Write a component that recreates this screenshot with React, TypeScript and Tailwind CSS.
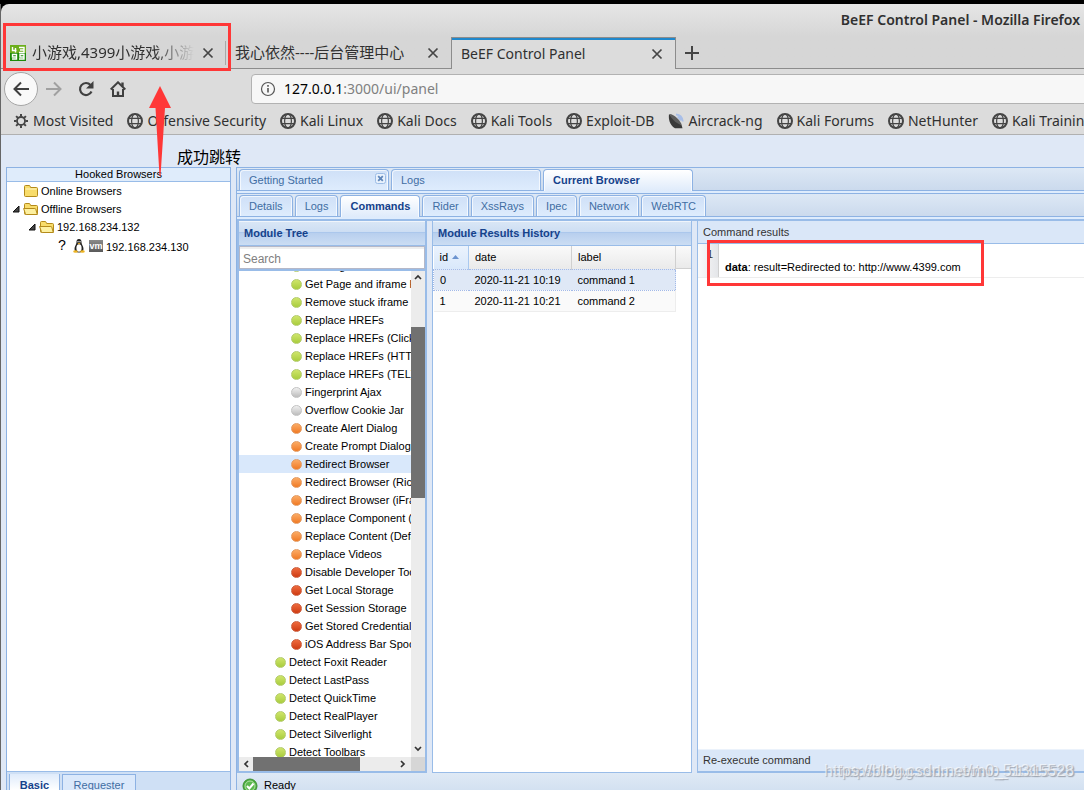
import type { ReactNode } from "react";
import { clsx } from "clsx";

type Dot = "green" | "gray" | "orange" | "red";

type Module = {
  name: string;
  dot: Dot;
  level: 1 | 2;
};

const MODULES: Module[] = [
  { name: "Get Page HTML", dot: "green", level: 2 },
  { name: "Get Page and iframe HTML", dot: "green", level: 2 },
  { name: "Remove stuck iframe", dot: "green", level: 2 },
  { name: "Replace HREFs", dot: "green", level: 2 },
  { name: "Replace HREFs (Click Events)", dot: "green", level: 2 },
  { name: "Replace HREFs (HTTPS)", dot: "green", level: 2 },
  { name: "Replace HREFs (TEL)", dot: "green", level: 2 },
  { name: "Fingerprint Ajax", dot: "gray", level: 2 },
  { name: "Overflow Cookie Jar", dot: "gray", level: 2 },
  { name: "Create Alert Dialog", dot: "orange", level: 2 },
  { name: "Create Prompt Dialog", dot: "orange", level: 2 },
  { name: "Redirect Browser", dot: "orange", level: 2 },
  { name: "Redirect Browser (Rickroll)", dot: "orange", level: 2 },
  { name: "Redirect Browser (iFrame)", dot: "orange", level: 2 },
  { name: "Replace Component (Deface)", dot: "orange", level: 2 },
  { name: "Replace Content (Deface)", dot: "orange", level: 2 },
  { name: "Replace Videos", dot: "orange", level: 2 },
  { name: "Disable Developer Tools", dot: "red", level: 2 },
  { name: "Get Local Storage", dot: "red", level: 2 },
  { name: "Get Session Storage", dot: "red", level: 2 },
  { name: "Get Stored Credentials", dot: "red", level: 2 },
  { name: "iOS Address Bar Spoofing", dot: "red", level: 2 },
  { name: "Detect Foxit Reader", dot: "green", level: 1 },
  { name: "Detect LastPass", dot: "green", level: 1 },
  { name: "Detect QuickTime", dot: "green", level: 1 },
  { name: "Detect RealPlayer", dot: "green", level: 1 },
  { name: "Detect Silverlight", dot: "green", level: 1 },
  { name: "Detect Toolbars", dot: "green", level: 1 },
];

const DOT_CLASS: Record<Dot, string> = {
  green: "from-[#cfe56a] to-[#a9cd3c] border-[#b3cb6c]",
  gray: "from-[#f0f0f0] to-[#bdbdbd] border-[#c2c2c2]",
  orange: "from-[#fbab63] to-[#f07a20] border-[#e39a62]",
  red: "from-[#ee6a3c] to-[#cf3a10] border-[#cc6040]",
};

const BOOKMARKS = [
  "Offensive Security",
  "Kali Linux",
  "Kali Docs",
  "Kali Tools",
  "Exploit-DB",
  "Aircrack-ng",
  "Kali Forums",
  "NetHunter",
  "Kali Training",
];

const COMMAND_TABS = ["Details", "Logs", "Commands", "Rider", "XssRays", "Ipec", "Network", "WebRTC"];

const HISTORY = [
  { id: 0, date: "2020-11-21 10:19", label: "command 1" },
  { id: 1, date: "2020-11-21 10:21", label: "command 2" },
];

function GlobeIcon() {
  return (
    <svg className="size-4 shrink-0" viewBox="0 0 16 16" fill="none" stroke="#454545">
      <circle cx="8" cy="8" r="7" strokeWidth="2" />
      <ellipse cx="8" cy="8" rx="3.4" ry="7" strokeWidth="1.2" />
      <path d="M1.8 5.4h12.4M1.8 10.6h12.4" strokeWidth="1.2" />
    </svg>
  );
}

function GearIcon() {
  return (
    <svg className="size-4 shrink-0" viewBox="0 0 16 16" fill="none" stroke="#454545">
      <circle cx="8" cy="8" r="4" strokeWidth="1.8" />
      <path
        d="M8 1v2.6M8 12.4V15M1 8h2.6M12.4 8H15M3.1 3.1l1.8 1.8M11.1 11.1l1.8 1.8M12.9 3.1l-1.8 1.8M4.9 11.1l-1.8 1.8"
        strokeWidth="2"
      />
    </svg>
  );
}

function DishIcon() {
  return (
    <svg className="size-4 shrink-0" viewBox="0 0 16 16">
      <path d="M8 1.5c4 .4 6.4 3 6.8 7M9.5 4c2 .4 2.8 1.5 3.2 3.5" fill="none" stroke="#a9bfe8" strokeWidth="1.8" />
      <path d="M1 1c-.6 5 .4 11 6 14.2h7.5L13.6 12C9.5 9.5 5 5.5 1 1z" fill="#3a3a3a" />
      <path d="M1.5 1c1 3.5 5.5 9 12.2 11.3C13.5 8.5 6 1 1.5 1z" fill="#5d5d5d" />
    </svg>
  );
}

function CloseIcon() {
  return (
    <svg className="size-3 shrink-0" viewBox="0 0 12 12" stroke="#454545" strokeWidth="1.7" fill="none">
      <path d="M1.5 1.5l9 9M10.5 1.5l-9 9" />
    </svg>
  );
}

function Favicon4399() {
  return (
    <svg className="size-4 shrink-0" viewBox="0 0 16 16">
      <rect width="16" height="8" fill="#6cae1c" />
      <rect y="8" width="16" height="8" fill="#1c8a08" />
      <path
        d="M2.5 2v3.5h4M5.5 3v4.5M9 2.5h5v5H9M10 5h4M2 14h4.5V9.500H2.500V12h4M9 14h5V9.500h-4V12h4"
        fill="none"
        stroke="#fff"
        strokeWidth="1.4"
      />
    </svg>
  );
}

function FolderIcon({ open }: { open?: boolean }) {
  return (
    <svg className="h-4 w-4 shrink-0" viewBox="0 0 16 16">
      <path
        d="M1.5 12.5V3.5q0-1 1-1h3.5q1 0 1.3 1l.3 1h5.9q1 0 1 1v7q0 1-1 1h-11q-1 0-1-1z"
        fill="#f8dc6a"
        stroke="#b48a1a"
      />
      {open ? (
        <path d="M.6 7.5h11.2q.8 0 1 .8l1.5 5.2H3.4q-.8 0-1-.8z" fill="#fdf0a0" stroke="#b48a1a" />
      ) : (
        <path d="M2.5 6h11" stroke="#fff6c8" />
      )}
    </svg>
  );
}

function Expander() {
  return (
    <svg className="size-2 shrink-0" viewBox="0 0 8 8">
      <path d="M7 1v6H1z" fill="#444" stroke="#111" />
    </svg>
  );
}

function PenguinIcon() {
  return (
    <svg className="size-4 shrink-0" viewBox="0 0 16 16">
      <path
        d="M8 1c-2 0-2.6 1.5-2.5 3.5C5.4 6.5 3.5 8 3.5 11c0 2 1.500 3.500 4.500 3.500s4.500-1.500 4.500-3.500c0-3-1.900-4.500-2-6.500C10.600 2.500 10 1 8 1z"
        fill="#222"
      />
      <ellipse cx="8" cy="10" rx="2.6" ry="3.8" fill="#fff" />
      <path d="M6.500 5h3L8 6.500z" fill="#f0b020" />
      <circle cx="7" cy="3.8" r=".7" fill="#fff" />
      <circle cx="9" cy="3.8" r=".7" fill="#fff" />
      <ellipse cx="4.500" cy="13.500" rx="2.300" ry="1.300" fill="#eeb422" />
      <ellipse cx="11.500" cy="13.500" rx="2.300" ry="1.300" fill="#eeb422" />
    </svg>
  );
}

function Chevron({ dir }: { dir: "up" | "down" | "left" | "right" }) {
  const paths = {
    up: "M1 6l3-3 3 3",
    down: "M1 2l3 3 3-3",
    left: "M6 1L3 4l3 3",
    right: "M2 1l3 3-3 3",
  };
  return (
    <svg className="size-2" viewBox="0 0 8 8" fill="none" stroke="#333" strokeWidth="1.7">
      <path d={paths[dir]} />
    </svg>
  );
}

function BrowserTab({ title, active, icon, cjk }: { title: string; active?: boolean; icon?: ReactNode; cjk?: boolean }) {
  return (
    <div
      className={clsx(
        "flex h-8 w-[225px] shrink-0 items-center pr-3",
        active
          ? "border-x border-t border-x-[#8c8c8c] border-t-[#8c8c8c] bg-[#dcdcdc] pl-[9px] shadow-[inset_0_2px_#2088cc]"
          : "border-b border-[#8c8c8c] pl-[9px]",
      )}
    >
      {icon && <span className="mr-1.5">{icon}</span>}
      <button
        className={clsx(
          "min-w-0 flex-1 overflow-hidden text-left whitespace-nowrap",
          cjk && "text-[15px]",
          icon && "mask-r-from-75%",
        )}
      >
        {title}
      </button>
      <button className="ml-2" aria-label="Close tab">
        <CloseIcon />
      </button>
    </div>
  );
}

function ExtTab({ label, active, wide, closable }: { label: string; active?: boolean; wide?: boolean; closable?: boolean }) {
  return (
    <button
      className={clsx(
        "flex justify-between rounded-t border border-b-0 border-[#8db2e3] px-[9px] text-left leading-5 shadow-[inset_1px_1px_#ffffffb0,inset_-1px_0_#ffffffb0]",
        wide && "w-[150px]",
        active
          ? "-mb-px bg-linear-to-b from-white to-[#dfebfb] font-bold text-[#15428b]"
          : "bg-linear-to-b from-[#cfe0f7] to-[#deecfd] text-[#416da3]",
      )}
    >
      {label}
      {closable && (
        <svg className="mt-[3px] -mr-[7px] size-[11px]" viewBox="0 0 11 11">
          <rect x=".5" y=".5" width="10" height="10" rx="2" fill="#e8f1fc" stroke="#9dbde6" />
          <path d="M3.2 3.2l4.6 4.6M7.8 3.2L3.2 7.8" stroke="#5f86ba" strokeWidth="1.8" />
        </svg>
      )}
    </button>
  );
}

function PanelHeader({ children }: { children: ReactNode }) {
  return (
    <h2 className="h-[25px] shrink-0 border-b border-[#99bce8] bg-[linear-gradient(#dae7f6,#cddef3_45%,#abc7ec_46%,#abc7ec_50%,#b8cfee_51%,#cbddf3)] px-[5px] leading-[25px] font-bold text-[#15428b] shadow-[inset_0_1px_#f0f5fb]">
      {children}
    </h2>
  );
}

function FirefoxChrome() {
  return (
    <header className="shrink-0 rounded-tl-lg border-b border-[#b0b0b0] bg-linear-to-b from-[#e6e6e6] to-[#d6d6d6] to-25% font-['Noto_Sans','Noto_Sans_CJK_SC',sans-serif] text-sm text-[#303030]">
      <h1 className="h-[33px] pr-1 text-right leading-8 font-semibold">BeEF Control Panel - Mozilla Firefox</h1>
      <nav className="flex overflow-hidden" aria-label="Tabs">
        <BrowserTab title="小游戏,4399小游戏,小游戏大全" icon={<Favicon4399 />} cjk />
        <div className="-ml-px flex items-center border-b border-[#8c8c8c]">
          <div className="h-6 w-px bg-[#a8a8a8]" />
        </div>
        <BrowserTab title="我心依然----后台管理中心" cjk />
        <BrowserTab title="BeEF Control Panel" active />
        <div className="flex flex-1 items-center border-b border-[#8c8c8c] pl-2">
          <button aria-label="New tab">
            <svg className="size-4" viewBox="0 0 16 16" stroke="#454545" strokeWidth="2">
              <path d="M8 1v14M1 8h14" />
            </svg>
          </button>
        </div>
      </nav>
      <div className="flex h-10 items-center bg-[#dcdcdc] pl-[3px]">
        <button
          aria-label="Back"
          className="flex size-[34px] items-center justify-center rounded-full border border-[#a6a6a6] bg-[#f9f9f9]"
        >
          <svg className="size-4" viewBox="0 0 16 16" fill="none" stroke="#404040" strokeWidth="2">
            <path d="M16 8H1.500M8 1.500L1.500 8 8 14.500" />
          </svg>
        </button>
        <button aria-label="Forward" className="ml-2">
          <svg className="size-4" viewBox="0 0 16 16" fill="none" stroke="#a0a0a0" strokeWidth="2">
            <path d="M0 8h14.500M8 1.500L14.500 8 8 14.500" />
          </svg>
        </button>
        <button aria-label="Reload" className="ml-4">
          <svg className="size-4" viewBox="0 0 16 16">
            <path d="M13.500 10.500A6 6 0 1 1 12.500 4" fill="none" stroke="#404040" strokeWidth="2.2" />
            <path d="M15.500 0v7.500H8z" fill="#404040" />
          </svg>
        </button>
        <button aria-label="Home" className="ml-4">
          <svg className="size-4" viewBox="0 0 16 16" fill="none" stroke="#404040">
            <path d="M.7 8.500L8 1.300l7.300 7.200" strokeWidth="2" />
            <path d="M3 8v7h10V8" strokeWidth="2" />
            <path d="M8 15v-4.500M12.500 1.500v4" strokeWidth="2.4" />
          </svg>
        </button>
        <label className="-mr-1 ml-[125px] flex h-[30px] flex-1 items-center rounded-sm border border-[#b2b2b2] bg-[#f7f7f7] pl-2 text-[#808080]">
          <svg className="mr-2 size-4 shrink-0" viewBox="0 0 16 16" fill="none" stroke="#555">
            <circle cx="8" cy="8" r="6.5" strokeWidth="1.2" />
            <path d="M8 7v4.500M8 4v1.700" strokeWidth="1.6" />
          </svg>
          <span className="text-black">127.0.0.1</span>
          <input type="text" defaultValue=":3000/ui/panel" className="min-w-0 flex-1 outline-none" />
        </label>
      </div>
      <nav
        className="flex h-[25px] items-center gap-3.5 overflow-hidden bg-[#dcdcdc] pb-0.5 pl-3 whitespace-nowrap"
        aria-label="Bookmarks"
      >
        <a href="#visited" className="flex items-center gap-1">
          <GearIcon />
          Most Visited
        </a>
        {BOOKMARKS.map((name) => (
          <a key={name} href="#bookmark" className="flex items-center gap-1">
            {name === "Aircrack-ng" ? <DishIcon /> : <GlobeIcon />}
            {name}
          </a>
        ))}
      </nav>
    </header>
  );
}

function HookedBrowsers() {
  return (
    <aside className="flex w-[225px] shrink-0 flex-col border-x border-t border-[#8db2e3] bg-white">
      <h2 className="border-b border-[#99bce8] bg-[#dfecfb] text-center leading-[13px]">Hooked Browsers</h2>
      <ul className="flex-1 leading-[18px]">
        <li className="flex h-[18px] items-center gap-0.5 pl-4">
          <FolderIcon />
          Online Browsers
        </li>
        <li className="flex h-[18px] items-center gap-[3px] pl-[5px]">
          <Expander />
          <span className="flex items-center gap-0.5">
            <FolderIcon open />
            Offline Browsers
          </span>
        </li>
        <li className="flex h-[18px] items-center gap-[3px] pl-[21px]">
          <Expander />
          <span className="flex items-center gap-0.5">
            <FolderIcon open />
            192.168.234.132
          </span>
        </li>
        <li className="flex h-5 items-center pl-[51px]">
          <span className="w-[13px] font-['Liberation_Mono',monospace] text-sm">?</span>
          <PenguinIcon />
          <span className="mr-[3px] ml-0.5 flex h-3 w-3.5 items-center justify-center bg-linear-to-b from-[#8a8a8a] to-[#5a5a5a] text-[9px] font-bold text-white">
            vm
          </span>
          <span className="pt-0.5">192.168.234.130</span>
        </li>
      </ul>
      <div className="flex h-[19px] gap-0.5 border-t border-[#99bce8] bg-[#cfe0f5] pt-0.5 pl-0.5">
        <button className="w-[51px] border-x border-[#8db2e3] bg-linear-to-b from-[#dfebfb] to-white pt-0.5 leading-[18px] font-bold text-[#15428b]">
          Basic
        </button>
        <button className="w-[74px] border-x border-t border-[#8db2e3] bg-[#dbe9fb] pt-px leading-[18px] text-[#416da3]">
          Requester
        </button>
      </div>
    </aside>
  );
}

function ModuleTree() {
  return (
    <section className="flex w-[190px] shrink-0 flex-col border-x-2 border-b-2 border-[#99bce8] bg-white">
      <PanelHeader>Module Tree</PanelHeader>
      <input
        type="text"
        placeholder="Search"
        aria-label="Search modules"
        className="h-[23px] w-full shrink-0 border border-[#b5b8c8] px-[3px] pt-0.5 text-xs shadow-[inset_0_2px_#eeeeee] placeholder:text-[#808080]"
      />
      <div className="h-0.5 shrink-0 bg-[#99bce8]" />
      <div className="flex min-h-0 flex-1">
        <div className="min-w-0 flex-1 overflow-hidden">
          <ul className="-mt-3.5">
            {MODULES.map((mod) => (
              <li
                key={mod.name}
                className={clsx(
                  "flex h-[18px] items-center gap-[3px] leading-[18px] whitespace-nowrap",
                  mod.level === 2 ? "pl-[52px]" : "pl-9",
                  mod.name === "Redirect Browser" && "bg-[#d9e8fb]",
                )}
              >
                <span className={clsx("mt-px size-[11px] shrink-0 rounded-full border bg-linear-to-b", DOT_CLASS[mod.dot])} />
                {mod.name}
              </li>
            ))}
          </ul>
        </div>
        <div className="flex w-3.5 shrink-0 flex-col items-center justify-between bg-[#ececec] pt-0.5 pb-1">
          <div className="flex w-full flex-col items-center">
            <Chevron dir="up" />
            <div className="mt-[46px] h-[171px] w-full bg-[#717171]" />
          </div>
          <Chevron dir="down" />
        </div>
      </div>
      <div className="flex h-3.5 shrink-0 items-center bg-[#ececec] pl-[3px]">
        <Chevron dir="left" />
        <div className="ml-[3px] h-full w-[107px] bg-[#717171]" />
        <div className="flex flex-1 justify-end pr-1">
          <Chevron dir="right" />
        </div>
        <div className="h-full w-3.5 bg-[#d6d6d6]" />
      </div>
    </section>
  );
}

function ResultsHistory() {
  return (
    <section className="flex w-[260px] shrink-0 flex-col border-x border-b border-[#99bce8] bg-white">
      <PanelHeader>Module Results History</PanelHeader>
      <div className="flex">
        <table className="w-[243px] shrink-0 table-fixed border-collapse text-left leading-5">
          <thead>
            <tr className="h-[23px] bg-linear-to-b from-[#fafafa] to-[#eaeaea]">
              <th className="w-[35px] border-r border-[#a9c9f0] bg-linear-to-b from-[#ebf3fd] to-[#d9e8fb] pl-1.5 font-normal">
                <span className="flex items-center gap-1">
                  id
                  <svg className="h-1 w-[7px]" viewBox="0 0 7 4">
                    <path d="M3.500 0L7 4H0z" fill="#6b93cf" />
                  </svg>
                </span>
              </th>
              <th className="w-[103px] border-r border-[#d0d0d0] pl-1.5 font-normal">date</th>
              <th className="border-r border-[#d0d0d0] pl-1.5 font-normal">label</th>
            </tr>
          </thead>
          <tbody>
            {HISTORY.map((row) => (
              <tr
                key={row.id}
                className={clsx(
                  "h-[21px]",
                  row.id === 0
                    ? "border border-dotted border-[#a3bae9] bg-[#dfe8f6]"
                    : "border-r border-b border-[#ededed] bg-[#fafafa]",
                )}
              >
                <td className="pl-1.5">{row.id}</td>
                <td className="pl-1.5">{row.date}</td>
                <td className="pl-1.5">{row.label}</td>
              </tr>
            ))}
          </tbody>
        </table>
        <div className="h-[23px] flex-1 border-b border-[#d0d0d0] bg-linear-to-b from-[#fafafa] to-[#eaeaea]" />
      </div>
    </section>
  );
}

function CommandResults() {
  return (
    <section className="relative flex min-w-0 flex-1 flex-col border-b-2 border-l border-[#99bce8] bg-white text-[#333]">
      <h2 className="h-[23px] shrink-0 border-b border-[#99bce8] bg-[#dae7f8] px-[5px] leading-[22px]">Command results</h2>
      <div className="flex h-[34px] border-b border-[#ededed]">
        <div className="w-[21px] border-r border-[#d0d0d0] bg-linear-to-r from-[#fafafa] to-[#e4e6e9] pr-[5px] text-right leading-5">
          1
        </div>
        <p className="pt-[15px] pl-1.5 leading-4 text-black">
          <b>data</b>: result=Redirected to: http://www.4399.com
        </p>
      </div>
      <div className="flex-1" />
      <button className="h-[22px] bg-[#dae7f8] px-[5px] text-left leading-5 shadow-[inset_0_1px_#ebf2fb]">
        Re-execute command
      </button>
      <div className="absolute top-[19px] left-[9px] h-[46px] w-[277px] border-[3px] border-[#ff3737]" />
    </section>
  );
}

export default function App() {
  return (
    <div className="relative flex h-screen flex-col overflow-hidden bg-black pt-1 font-['Liberation_Sans',sans-serif] text-[11px] text-black">
      <div className="flex min-h-0 flex-1 flex-col border-l border-[#666]">
        <FirefoxChrome />
        <main className="flex min-h-0 flex-1 gap-[5px] bg-[#dfe8f6] pt-8 pl-[5px]">
          <HookedBrowsers />
          <div className="flex min-w-0 flex-1 flex-col border-t border-l border-[#8db2e3]">
            <div className="flex gap-0.5 border-b border-[#8db2e3] bg-linear-to-b from-[#dde8f5] to-[#cbdaed] px-0.5 pt-px">
              <ExtTab label="Getting Started" wide closable />
              <ExtTab label="Logs" wide />
              <ExtTab label="Current Browser" wide active />
            </div>
            <div className="h-0.5 bg-[#deecfd]" />
            <div className="flex gap-0.5 border-y border-[#8db2e3] bg-linear-to-b from-[#dde8f5] to-[#cbdaed] px-0.5 pt-px">
              {COMMAND_TABS.map((label) => (
                <ExtTab key={label} label={label} active={label === "Commands"} />
              ))}
            </div>
            <div className="h-0.5 bg-[#deecfd]" />
            <div className="flex min-h-0 flex-1 gap-[5px] border-t-2 border-[#99bce8]">
              <ModuleTree />
              <ResultsHistory />
              <CommandResults />
            </div>
            <footer className="flex h-[17px] items-center gap-1.5 bg-linear-to-b from-[#dfe9f5] to-[#d3e1f1] pt-2 pl-[5px]">
              <svg className="size-4 shrink-0" viewBox="0 0 16 16">
                <circle cx="8" cy="8" r="7" fill="#4caf3d" stroke="#3d8f35" />
                <circle cx="8" cy="8" r="5" fill="#5cb84f" stroke="#b5e0aa" />
                <path d="M5 8l2.300 2.500L11.500 5.500" fill="none" stroke="#fff" strokeWidth="2" />
              </svg>
              Ready
            </footer>
          </div>
        </main>
      </div>

      {/* annotations drawn over the window */}
      <div className="absolute top-[23px] left-[3px] h-12 w-[228px] border-[3px] border-[#ff3737]" />
      <svg className="absolute top-[86px] left-[148px] h-[90px] w-6" viewBox="0 0 24 90">
        <path d="M12 0l11 22h-6L12.500 90h-1L7.500 22H1z" fill="#ff3737" />
      </svg>
      <p className="absolute top-[144px] left-[177px] font-['Noto_Sans_CJK_SC',sans-serif] text-base leading-6">成功跳转</p>
      <p className="absolute right-2.5 bottom-[9px] text-[15px] leading-5 text-white/60 [text-shadow:1px_1px_1px_#a0a8b4]">
        https://blog.csdn.net/m0_51315528
      </p>
      <p
        aria-hidden="true"
        className="absolute right-2.5 bottom-[9px] text-base leading-5 text-white/60 [text-shadow:1px_1px_1px_#a0a8b4]"
      >
        https://blog.csdn.net/m0_51315528
      </p>
    </div>
  );
}
